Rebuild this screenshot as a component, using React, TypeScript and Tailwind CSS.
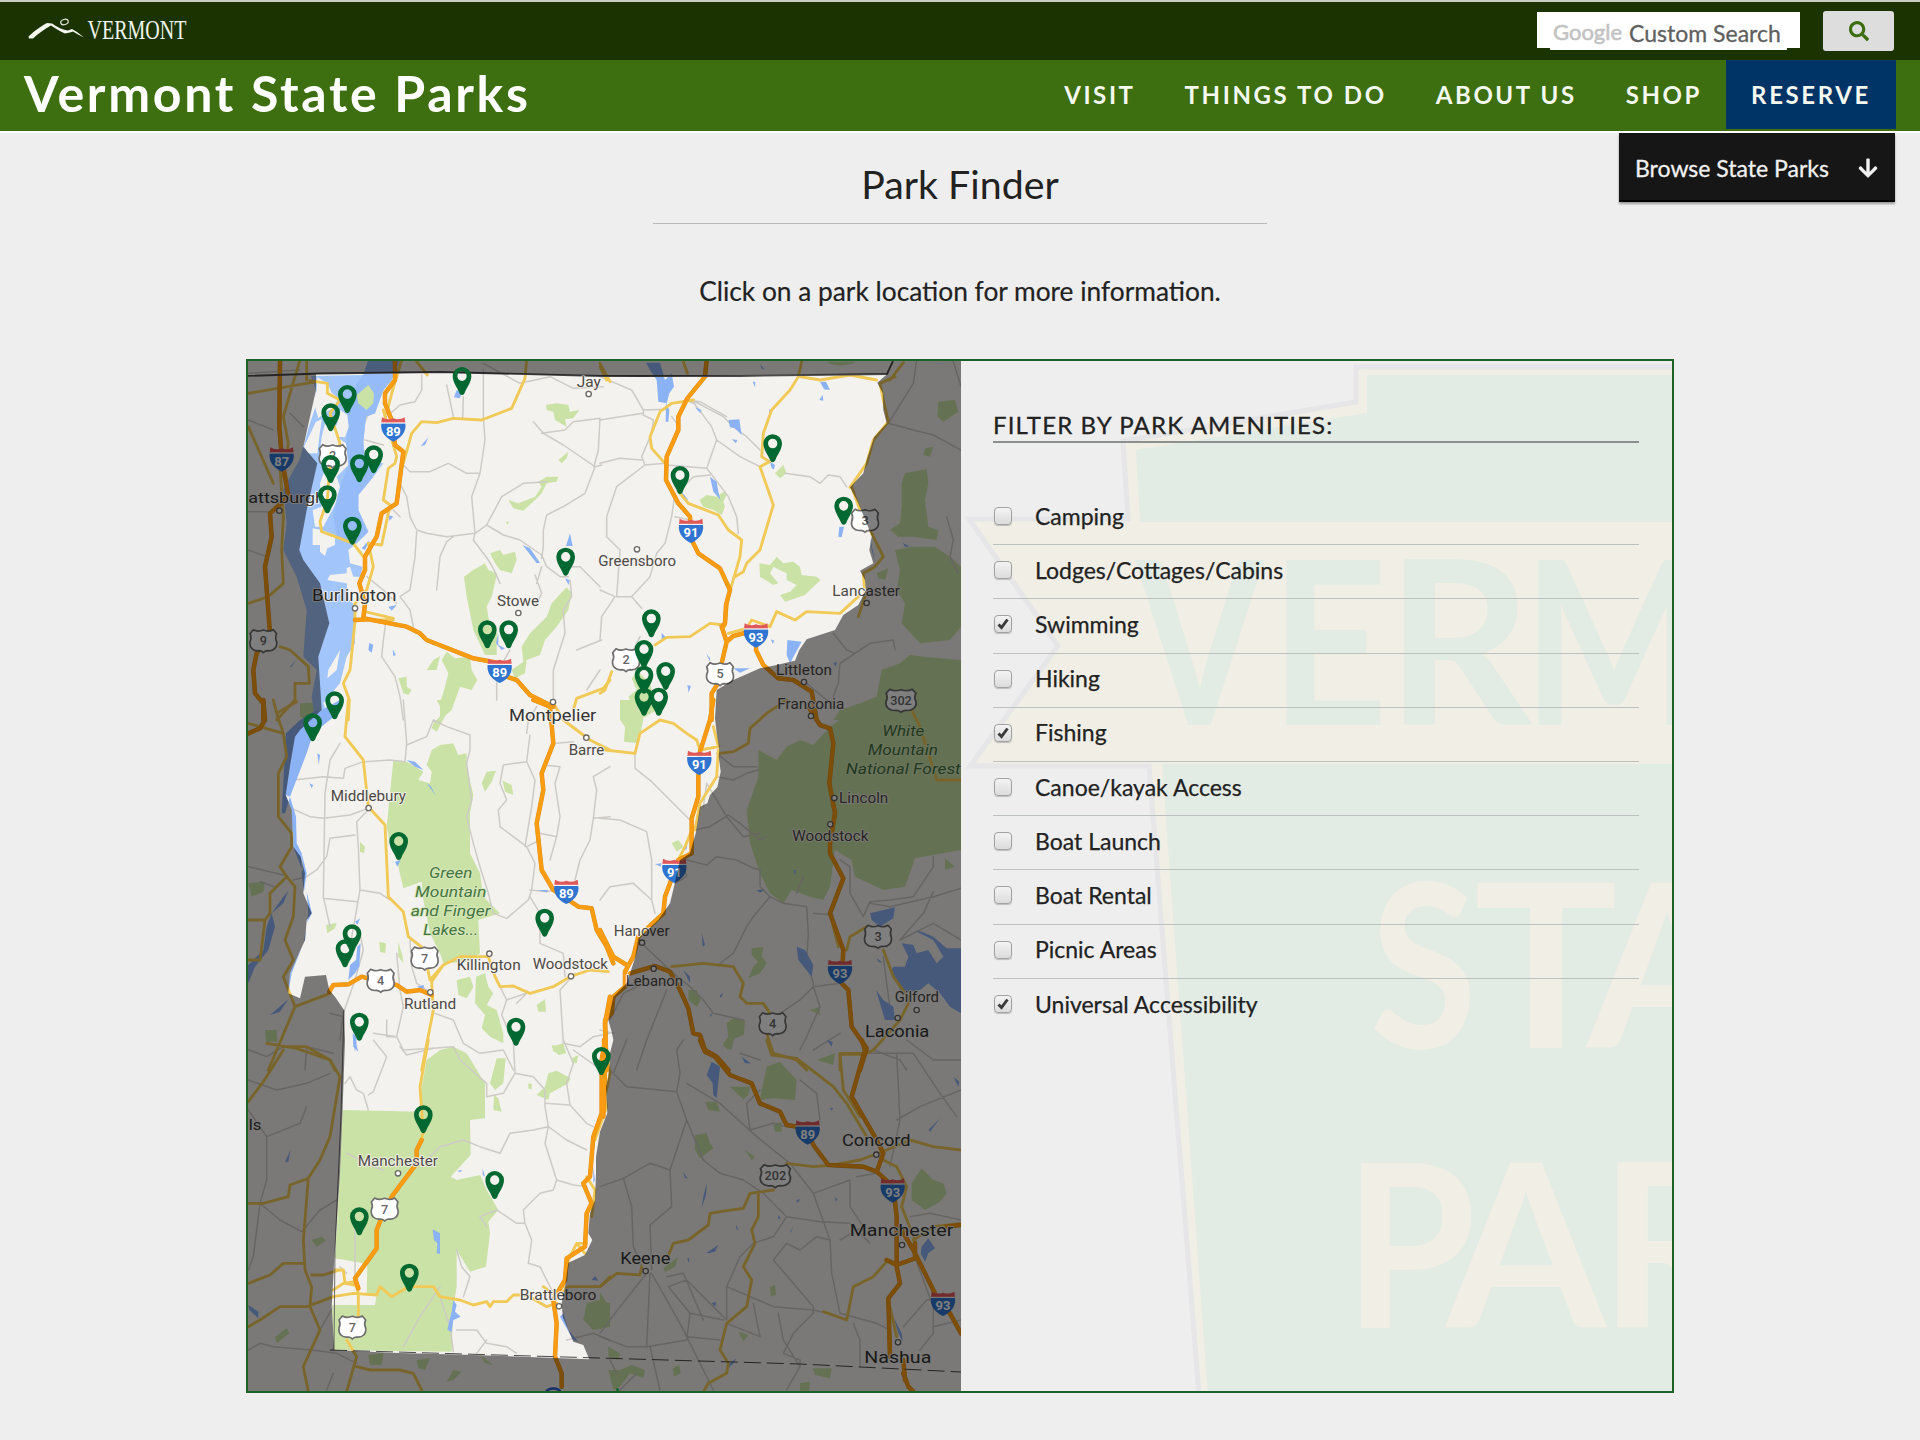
import React from "react";
import { FaSearch, FaArrowDown } from "react-icons/fa";

type TileId = "A" | "B" | "C" | "D" | "E" | "F";

/* Map survey sheets: each sheet has its own origin, three units per pixel. */
const ORIGIN: Record<TileId, [number, number]> = {
  A: [240, 350],
  B: [600, 350],
  C: [240, 700],
  D: [600, 700],
  E: [240, 1040],
  F: [600, 1040],
};
const at = (t: TileId) => `translate(${ORIGIN[t][0]} ${ORIGIN[t][1]}) scale(0.33333)`;

const OUTLINE: [TileId, string][] = [
  ["A", "228,72 400,70 600,68 1080,78"],
  ["B", "120,80 420,76 862,72 832,98 848,130 850,180 860,220 822,262 800,330 790,370 750,412 775,460 800,520 815,560 808,600 820,640 780,662 795,690 798,720 775,765 730,795 705,840 620,868 598,900 585,932 530,945 480,955 400,990 350,1020 345,1105"],
  ["D", "350,100 358,150 356,170 362,215 352,262 330,285 322,310 300,320 287,400 270,460 240,480 222,560 210,610 175,660 115,715 105,775 80,850 40,890 25,960 36,1000 40,1020 30,1060"],
  ["F", "30,60 25,110 18,140 22,220 0,275"],
  ["E", "1068,350 1068,400 1065,480 1050,520 1045,580 1057,600 1035,645 985,668 975,740 965,790 968,830 1000,905 1030,915 1048,958 700,945 450,938 283,930 275,800 285,620 300,400 308,200 315,0"],
  ["C", "312,930 285,890 268,870 258,825 195,830 180,895 145,880 150,820 195,720 200,660 215,640 190,580 195,520 182,470 160,440 155,330 137,285 150,200 165,110 180,90 245,30"],
  ["A", "245,1080 240,1000 235,920 248,880 268,820 240,700 190,630 178,600 200,480 232,340 190,290 210,200 228,120"],
];
const outlinePath =
  "M" +
  OUTLINE.flatMap(([t, s]) =>
    s.split(" ").map((p) => {
      const [x, y] = p.split(",").map(Number);
      return `${(ORIGIN[t][0] + x / 3).toFixed(1)} ${(ORIGIN[t][1] + y / 3).toFixed(1)}`;
    })
  ).join("L") +
  "Z";

const PARKS: [TileId, string][] = [
  ["A", "M355 160L350 130L368 122L385 105L402 125L400 160L380 180Z M918 165L950 160L985 165L990 185L1018 180L1000 205L975 208L980 230L945 210L940 185L920 180Z M805 450L835 460L860 450L885 440L905 410L895 395L920 380L955 380L950 395L920 400L905 430L880 455L850 482L820 475Z M955 330L985 305L980 325L965 340Z M750 610L780 600L790 615L825 605L830 630L815 670L780 660L765 640Z M672 680L700 660L735 640L745 660L770 670L765 700L755 740L740 770L750 830L772 850L770 880L770 915L735 915L700 840L690 790L680 740Z M980 712L995 730L985 780L950 830L915 870L900 915L860 930L855 970L825 985L815 960L850 935L845 890L870 850L920 800L935 760Z M560 960L580 930L600 918L590 960Z M605 930L620 905L645 925L690 920L695 960L712 990L695 1020L660 1010L635 1080L600 1110L600 1060L615 1010L625 970Z M475 985L500 980L500 1010L515 1020L505 1035L490 1030Z M180 1060L235 1058L240 1075L200 1110L180 1100Z M798 515L808 515L802 525Z"],
  ["B", "M525 370L550 345L560 370L540 385Z M298 450L320 435L350 440L370 425L380 435L370 455L375 470L365 495L340 480L310 470Z M478 640L510 645L530 620L550 640L580 635L600 650L605 675L650 680L662 690L640 710L615 735L555 755L540 735L570 725L590 705L560 690L560 670L520 650L510 670L535 700L520 705L480 680Z M1015 155L1065 150L1075 185L1030 215L1012 200Z M975 295L1000 290L990 320L970 315Z M915 370L980 358L985 400L975 450L985 530L1015 540L1010 570L940 560L895 560L870 540L900 520L905 470L905 400Z M885 600L940 590L1005 590L1050 620L1083 650L1083 830L1050 870L960 880L905 820L915 760L890 720L900 660Z M830 670L865 655L855 690L835 685Z M845 960L900 940L930 915L970 920L1083 930L1083 1110L700 1110L720 1080L780 1060L830 1040Z M680 35C700 50 745 50 768 35Z M95 985L115 965L150 1000L170 1080L120 1110L62 1110L60 1090L95 1060L85 1040L110 1020Z"],
  ["C", "M590 0L635 0L620 40L590 95L575 85L580 70L610 40Z M575 150L600 135L640 130L655 165L680 160L680 200L700 285L690 340L690 460L720 520L730 590L780 640L715 660L720 760L690 785L610 790L600 760L570 700L550 600L545 545L490 565L475 500L470 440L450 430L440 380L460 180L500 185L550 215L535 240L570 250L575 215L560 195Z M725 250L740 215L768 212L755 245L735 275Z M788 242L815 255L820 285L795 275Z M360 425L375 440L372 460L360 455Z M258 675L290 668L285 685L262 700Z M418 725L438 730L436 760L420 755Z M475 725L488 770L490 790L475 770Z M650 840L690 830L700 860L680 895L655 885Z M708 830L735 820L745 860L760 880L740 915L770 930L790 1000L790 1030L750 1010L725 985L735 945L705 910Z M890 915L915 898L918 935L895 935Z M75 990L110 990L112 1025L78 1025Z M25 550L75 545L70 575L35 590Z M935 1035L970 1040L965 1060L940 1055Z"],
  ["D", "M60 0L105 0L130 60L115 130L72 125L75 80L60 60Z M475 150L530 180L560 140L600 120L640 135L690 80L740 45L850 20L960 0L1083 0L1083 450L945 475L915 560L850 570L765 530L755 480L705 450L690 560L670 600L630 590L575 570L550 610L510 580L480 520L450 430L440 330L475 230Z M215 430L235 420L250 440L230 455Z M455 745L490 740L485 770L500 790L480 820L445 835L460 800L475 785L455 765Z M265 870L290 870L302 900L290 920L265 900Z M380 970L400 955L435 960L432 1005L405 1015L385 1050L368 1035L385 1010Z M1035 475L1065 500L1035 510Z M630 930L660 920L660 945Z"],
  ["E", "M560 60L600 30L640 20L680 40L735 130L735 235L690 240L692 345L632 410L650 420L720 405L740 450L775 510L745 545L750 580L738 680L690 695L650 630L650 740L640 800L635 935L283 930L275 795L405 795L410 765L380 760L382 672L285 655L300 400L308 210L545 215L545 140Z M770 55L797 55L790 130L765 150L750 130Z M762 165L775 175L785 215L760 210Z M890 165L915 140L925 100L950 92L992 115L985 130L930 160L925 180Z M935 20L970 10L978 40L955 45Z M995 55L1015 45L1010 70L998 70Z M865 130L875 132L875 148L865 146Z M215 600L245 590L258 602L230 620Z M105 890L140 865L148 880L110 910Z M1040 790L1075 780L1110 790L1110 860L1060 870L1030 840Z M385 945L430 940L425 975L390 975Z M530 960L570 955L555 990L535 985Z M620 1025L640 990L665 995L640 1020Z M720 945L760 975L735 970Z"],
  ["F", "M485 150L500 80L540 65L590 120L585 180L520 175L480 180Z M390 140L450 140L445 165L430 178Z M315 185L350 185L360 215L325 210Z M285 285L320 280L330 310L340 325L300 355L285 330Z M520 255L545 245L545 275L525 275Z M435 330L465 350L455 360Z M650 60L705 40L700 75Z M935 430L965 385L1000 420L1030 430L1040 460L1020 485L975 510L935 480Z M190 685L235 650L225 680L195 695Z M510 740L525 735L528 765L512 770Z M0 755L20 790L30 840L0 870Z M415 875L445 885L430 903Z M25 990L60 990L95 975L135 990L130 1015L90 1000L60 1040L40 1050Z M218 985L238 975L242 1000L222 1010Z M600 1030L630 1025L628 1052L600 1052Z M638 985L695 985L690 1015L645 1005Z M370 5L400 5L395 30L375 20Z M25 920L60 940L55 960L25 950Z"],
];

const LAKE =
  "M213 78L228 120L225 175L208 225L190 290L178 330L150 380L130 420L140 520L130 600L170 680L200 780L195 850L190 920L230 960L215 1040L225 1110L255 1110L262 1090L250 1060L300 1000L320 920L345 880L342 800L350 775L325 745L320 700L262 690L270 675L320 670L320 655L330 650L340 680L360 680L368 650L330 640L325 600L350 580L385 545L355 480L355 435L400 380L430 340L375 330L370 275L378 200L405 190L430 120L455 90L480 30L385 30L370 75Z";
const ISLANDS =
  "M232 82L262 100L275 128L295 145L280 175L258 185L235 205L222 160L230 120Z M228 215L245 208L238 260L232 310L205 310L192 290Z M302 180L322 195L326 230L315 262L285 260L270 240L290 225Z M262 195L280 255L318 280L325 345L290 380L300 410L285 465L250 530L225 530L218 480L245 470L240 400L255 360L238 320L245 260Z M218 535L245 540L285 555L285 585L262 595L255 618L240 605L240 585L218 585Z M265 960L300 900L290 960L262 985Z";

const WATER: [TileId, string][] = [
  ["A", "M650 120L665 125L660 145L642 142Z M542 288L565 262L555 285Z M990 550L998 588L978 588Z M848 585L870 595L900 638L890 640Z M445 770L470 765L455 782Z M388 878L400 885L395 908L385 900Z M458 898L468 915L460 918Z M445 495L460 500L448 512Z M775 850L775 885L795 895L785 900L768 880Z M975 685L988 690L986 705Z M365 595L388 570L375 600Z M150 950L168 930L155 950Z"],
  ["B", "M138 38L180 38L195 90L215 70L222 110L208 130L200 160L175 155L170 90L150 60Z M198 160L208 180L205 215L197 215Z M660 95L678 95L690 120L672 118Z M658 150L668 135L670 152Z M385 210L418 208L425 255L405 235L390 232Z M395 268L412 270L408 280Z M285 172L305 180L300 188Z M507 178L517 182L510 195Z M510 335L525 345L522 358L515 355Z M330 380L350 395L355 425L362 450L340 425Z M245 425L265 450L250 445Z M718 530L732 530L725 562L715 560Z M810 560L818 600L826 640L815 600Z M458 95L466 95L465 112Z M185 848L200 865L185 870Z M562 870L605 875L570 940L560 915Z M318 910L330 925L330 935Z M400 955L450 955L420 968Z M513 868L523 872L518 882Z M262 1005L273 1008L266 1028Z M480 42L495 60L485 55Z M105 625L122 628L112 645Z M908 578L930 590L915 590Z M1000 38L1062 44L1010 40Z M180 518L190 525Z M700 940L710 935L708 950Z"],
  ["C", "M245 30L300 0L295 40L220 100L200 160L150 290L137 285L165 110Z M125 340L138 100L180 60L230 30L245 40L165 110L150 200L137 285L155 330L160 440L190 520L185 460L170 430L168 350L150 290L135 340Z M185 460L200 520L192 575L185 520Z M232 160L240 165L236 195Z M208 250L220 255L215 265Z M500 180L525 185L550 210L525 200Z M560 250L572 258L588 288Z M465 485L482 480L472 500Z M200 575L216 640L200 670L195 720L150 820L145 880L155 820L192 725L205 640Z M345 665L360 655L352 675Z M352 740L362 730L358 800L345 820L325 840L330 795L348 780Z M80 680L95 640L130 590L145 572L130 610L95 640L105 680L85 750L45 800L25 850L20 800L70 750Z M90 945L145 898L120 935Z M530 860L552 855L550 868Z M338 1000L350 1010L348 1030L355 1055L340 1040Z M890 570L925 570L920 577Z"],
  ["D", "M145 235L168 255Z M165 492L185 490L182 500Z M250 450L262 435L260 448Z M305 700L315 735L308 740Z M590 740L615 750L640 795L635 830L595 780Z M810 640L885 622L880 655L840 680L815 660Z M905 730L940 735L950 760L985 750L1010 790L1030 770L1000 720L945 692L965 695L1000 710L1040 745L1083 745L1083 940L1050 920L1020 880L985 850L960 870L905 880L875 810L880 800L915 800L925 770Z M828 870L850 900L880 920L885 960L855 960Z M360 885L370 880L362 895Z M250 810L270 830L270 850Z M330 945L340 938L330 952Z M340 1090L358 1100L345 1105Z M680 1020L698 1025L695 1040Z M830 775L850 790L835 785Z M580 510L588 510L585 525Z M470 570L495 568L480 578Z M300 1080L315 1070Z M428 1075L452 1090L435 1090Z"],
  ["E", "M340 0L350 5L345 35Z M65 335L55 360Z M152 330L145 365L135 365Z M652 392L668 390L660 397Z M578 568L600 580L600 642L590 640L592 610L582 600Z M640 780L650 795L645 815L662 830L640 840L635 875L622 870L630 835L635 815Z M25 795L55 815L55 835L28 810Z M728 385L735 410L728 405Z M1060 380L1065 420L1060 430Z M960 830L1000 900L1015 905L985 870L970 820Z M900 680L905 705Z M1055 720L1065 708L1075 722Z M790 1020L805 1035Z"],
  ["F", "M335 65L360 80L350 175L340 165L338 130L320 105Z M250 395L262 415L255 415Z M320 430L318 465L305 505L310 470Z M320 638L355 615L345 635L325 640Z M262 655L268 655L266 670Z M965 620L985 595L1005 625L985 640L975 665L962 640Z M535 525L542 535L535 538Z M590 480L600 478L592 490Z M570 575L580 560L572 578Z M410 555L414 572L408 565Z M690 205L700 203L695 212Z M705 470L712 478L708 485Z M600 665L606 675Z M425 50L452 70L435 68Z M378 55L385 60Z M730 150L742 170Z M472 295L482 302Z M383 975L410 955L400 970L385 985Z M335 790L348 785L346 800Z M880 830L905 880L908 905L895 880Z M1060 110L1078 125L1075 140Z M1037 30L1045 45Z M985 270L1020 235L990 275Z M350 855L362 862Z M415 1010L425 1020Z M435 1025L442 1040Z M968 1020L980 1022Z M1005 1018L1020 1028Z M985 1000L1020 996Z"],
];

const MINOR: [TileId, string][] = [
  ["A", "M545 75L545 120L525 155L480 165L440 200 M620 105L640 200 M670 140L668 205 M730 60L730 200L735 270L720 370L695 440L705 550 M490 345L510 365L570 365L625 340L680 370L720 370 M480 400L500 440L510 500L530 540L560 550L620 560L705 550L740 525L785 440L850 400L920 395 M530 545L525 620L510 720L480 740 M705 550L700 570L745 630L760 655L780 700 M590 720L600 620L620 575L640 560 M740 525L790 555L840 570L905 615L920 650L960 680L985 680 M880 215L910 250L970 285L1065 350L1085 345 M1065 350L1035 430L970 470L920 495L910 540L910 590L905 625 M905 250L975 240L1000 215L1080 205 M1080 205L1075 300L1062 350 M440 800L430 870L425 920L465 980L480 1040L490 1110 M480 740L510 780L520 830 M470 760L430 720L380 680 M885 675L905 730L885 770 M990 690L995 740L970 780L975 850L940 960L940 1050 M810 900L790 935L770 1000L770 1050 M905 650L890 700 M380 90L430 120 M375 270L430 285 M375 215L400 160 M25 210L100 240 M150 190L190 230 M25 485L100 485 M25 70L180 60 M730 40L840 100L930 80L1000 115L1090 110 M25 600L80 620 M460 480L480 500 M980 650L1020 650L1080 710 M1010 900L1085 870 M1080 960L1040 1020"],
  ["B", "M0 80L95 120L130 180L130 195L160 210L155 250L125 320L135 345L195 340 M130 180L200 178 M0 210L60 200L130 190 M125 330L60 325L0 340 M200 345L320 355L350 270L335 230L275 150L370 200L400 230L440 260L480 300 M135 345L50 410L20 500L20 560L60 600L50 740L95 740L150 680L170 610L195 580L215 500L225 430 M0 720L45 740L5 800L0 870 M95 740L125 775 M350 270L420 320L480 350 M320 355L340 380L385 440L410 500L415 550 M215 200L230 220 M240 420L280 380L330 375 M555 370L630 380L660 400L685 375L720 380L740 410 M865 220L940 240L1000 255L1083 300 M950 30L940 100L865 220 M1060 35L1083 110 M280 160L260 150L300 155L380 200 M225 500L270 510 M790 740L820 720 M700 850L740 900L765 910L810 880L880 870L885 900 M765 910L720 940L715 1000L700 1040 M620 1000L680 1050L720 1060 M1040 500L1060 570L1050 620L1075 670 M100 900L120 860"],
  ["C", "M300 130L270 180L255 280L250 590L270 680 M375 185L450 180L495 185L500 130L490 0 M160 240L250 230L310 235L315 205L370 185 M155 325L210 350L250 355L330 345L385 325 M385 330L350 365L355 440L360 570L330 740L360 700L370 750L345 840L310 940L300 1020 M160 540L200 530L230 510L260 470L270 415L345 405 M250 595L350 605 M360 570L420 580L450 600 M500 135L560 110L580 60L620 80L690 105L690 150L680 190L695 300L680 350L700 430L720 500L745 580L760 640L800 655L865 600L875 570L885 490L860 440 M860 100L865 60L890 20 M950 130L1000 125 M790 195L860 185L870 105 M790 195L780 250L800 300L775 330L780 380L820 410L860 440L900 420 M860 185L885 240L875 320L855 440 M910 195L960 200L945 250L960 350L950 410L930 480 M950 410L900 400 M870 590L900 640L900 730L970 760L975 830 M1110 200L1060 230L1070 270L1060 355L1110 350 M1060 355L1050 420L1020 480L1005 540 M870 570L920 575L940 570 M510 720L515 800L530 850L560 870 M470 760L480 870L490 920L470 1010L400 1000 M585 940L640 960L670 1030L720 1060L790 1050L820 1110 M780 860L800 900L785 945L800 980 M800 900L860 880L830 910 M960 870L970 1030L1020 1040L1060 1010L1110 1000 M1005 820L960 870 M440 960L440 1010L470 1010L490 1050L580 1045 M25 500L130 525 M60 545L100 560 M130 1040L200 1040L195 1110 M200 1040L280 1060 M270 940L310 950"],
  ["D", "M105 160L105 205L155 245L230 320L270 360 M0 355L60 360L140 395L155 480L155 600L165 640 M0 600L30 560L100 550L155 600 M285 390L330 380L385 345L420 370L480 420L500 410 M260 480L320 495L350 470L410 480L450 500L480 510L480 560L510 590 M225 550L260 530L250 490 M350 160L400 200L470 200 M350 230L400 240L440 220L475 210 M510 590L460 650L440 680L400 760L360 790 M510 590L550 610L620 620L625 700L620 780L640 850L640 860L720 850 M640 860L600 900L540 940 M640 640L700 645 M720 480L750 500L750 580L790 650L810 605L870 600L940 590L1000 500L1000 470 M810 610L870 620L1000 590L1083 565 M1000 575L970 640L900 720L1000 670L1083 720 M30 960L70 880L110 860L160 845L190 850 M130 735L220 820L270 860L310 900L340 940L430 960 M110 1110L140 1020L200 870 M640 860L660 920L620 1010L600 1050 M860 740L820 700 M850 770L860 850L875 960 M590 580L610 530 M310 320L320 250L380 350L430 410L480 400 M0 990L40 1000 M820 1050L900 1080L920 1110 M420 1060L480 1080 M720 1000L640 1050"],
  ["E", "M330 110L350 150L370 160L385 210 M315 130L330 110 M385 165L400 155L440 50L400 0 M480 20L500 45L580 25L640 20L660 60L740 130L740 170L790 160L825 100L820 0 M825 100L880 110L915 150L915 200L925 260L880 270L810 280L780 340L720 320L670 300L600 320L570 350 M915 190L990 195L1040 250L1060 260 M990 195L980 130L1000 70L970 0 M1000 30L1070 80 M925 260L915 310L950 420L940 450L900 460L850 510L855 550L830 550L770 510L720 530L740 560 M950 420L1000 435L1040 440 M925 260L980 300L1040 330 M855 550L875 600L865 670L900 680L950 780 M345 570L345 720 M600 740L540 830L490 920 M600 770L630 860L640 935 M650 630L665 680L690 710L670 770 M650 870L710 870L740 910L800 920L830 940 M740 900L710 940 M25 210L80 290L80 420L60 490L120 540L185 575 M80 290L180 250L200 200 M25 120L110 150L200 130L270 100 M60 490L40 650L25 690 M240 510L185 575 M240 510L290 480 M25 930L60 910L100 920L215 930L290 940L350 970 M215 930L240 870L280 800 M280 1000L260 1050 M300 680L320 700 M320 340L400 380L430 390 M0 20L80 50L130 20 M980 900L1060 880L1110 900"],
  ["F", "M0 60L80 140L230 155L260 240L310 360L360 400L430 420L490 460L560 530L660 545L750 550L810 610 M80 0L40 100 M260 240L210 390L150 370L70 415L0 440 M210 390L215 500L150 555L155 690 M70 415L95 500L100 620L130 690 M260 130L360 190L470 290L570 370L640 460L690 600L695 700L720 820L830 850 M230 155L240 100L230 30L250 0 M480 150L440 190L450 270L520 250L560 260 M560 530L520 590L460 610L420 650L380 740L380 840L260 720L205 740L270 820L370 840 M640 460L750 420L750 500L790 560L720 600 M690 600L650 590L600 630L560 610L520 660L640 800L640 820 M640 820L580 880L550 940L600 960L600 980L560 1050 M535 820L550 900L600 980 M460 790L480 890L380 850 M260 890L360 900 M270 820L260 900L140 920L150 700 M150 920L180 1050 M140 700L60 800L0 880 M155 700L240 850L340 1050 M0 890L80 920L140 920 M380 740L520 800L640 810L680 820 M600 120L650 160L660 240 M870 380L900 240L890 40L800 40 M890 240L960 200L1083 150 M890 40L940 40L1020 160L1070 230 M1083 60L1000 60L920 0 M930 530L990 520L1083 540 M940 640L1000 800L1000 880L960 930 M1000 860L1083 840 M910 860L980 780L1040 770 M830 400L770 410 M760 850L780 900L780 980 M830 850L870 870 M310 840L250 700L200 710 M110 1000L60 1050 M50 1000L30 960"],
];

const YELLOW: [TileId, string][] = [
  ["A", "M210 92L262 100L262 130L300 150L270 190L300 280L270 340L262 450L240 515L245 545L300 565L340 580L370 620 M485 30L455 130L440 190 M430 180L470 320L465 340L445 355L430 450L450 465L425 585L385 580L400 650L380 720L345 760L345 810L460 810 M860 30L855 85L815 175L725 210L640 205L590 218L545 215L515 250L490 340 M375 785L460 805 M345 815L330 960L310 1000L328 1050L325 1110 M25 130L200 100L230 95 M200 30L200 90 M25 230L100 400 M120 350L130 500L125 600L130 700L85 740L25 760 M120 890L150 900L205 950L208 1000L165 1000L165 1050L110 1110 M180 30L150 130L130 200L145 280L130 380 M1110 990L1090 1015L1010 1045L1000 1080 M530 35L562 75 M1080 40L1110 95"],
  ["B", "M605 35L595 80L570 120L515 180L490 250L485 320L508 335L480 350L520 465L480 600L440 640L430 665L405 680 M600 80L660 90L750 75L830 90 M280 150L215 160L180 185L150 260L155 295L195 340 M240 430L265 460L355 495L385 540L425 570L420 620L385 740L375 830 M755 410L780 480L820 560L850 620L825 650L790 670L795 740L775 800 M775 740L720 790L620 785L585 810L530 785L510 830L455 810L440 835L385 850 M165 885L200 862L270 860L330 820L370 825 M35 965L15 1020L0 1030 M885 80L840 100L850 150L865 215L820 270L800 340L750 412 M250 35L262 70 M0 50L20 90 M910 38L870 90"],
  ["C", "M325 0L315 110L370 180L385 320L435 375L445 590L490 635L505 710L550 745L570 840L610 795L660 770L745 770L765 830L780 860L820 858L870 880L940 860L990 830L1050 810L1105 815 M610 795L575 845L580 930L545 1110 M940 10L970 60L1050 120L1110 150 M25 70L130 100L140 170L115 220L115 350L155 400L155 440L120 500L140 530L165 560L160 650L135 720L160 780L130 830L165 920L85 1110 M165 920L270 880 M140 530L90 580L90 640L75 660L60 780L25 780 M25 660L75 660 M110 40L130 100 M100 0L110 40L170 5 M80 1030L170 1045L270 1080L285 1110"],
  ["D", "M15 150L105 160L120 100L180 60L220 70L260 100L290 120L300 150 M340 80L355 140L300 150 M355 150L350 230L300 310L285 390 M235 480L255 440L280 380 M215 800L310 790L400 800L430 850L420 890L440 910L490 910L510 940L500 1000L520 1060L590 1080L620 1110 M800 680L750 710L740 750 M690 640L715 740 M850 750L880 830L930 900L900 960L820 1050L800 1060 M720 1060L790 1060 M720 1060L720 1110 M930 20L960 80L1010 240L1083 240 M360 160L400 155L445 130L450 85L500 40L560 0"],
  ["E", "M565 0L540 140L550 280L530 330 M280 770L340 760L410 765L420 740L455 770L505 740L580 740L600 770L660 780L700 795L740 785L750 800L760 785L800 785L820 765L860 765L920 800L950 790 M280 750L310 730L345 725L355 760L355 830 M285 690L310 690L315 730L345 735 M25 185L70 125L130 30 M130 20L200 20L270 60L300 110L270 290L240 360L205 415L150 435L145 470L70 490L25 490 M205 415L190 600L195 690L215 740L210 800L240 870L190 980L205 1055 M190 670L130 670L90 705L25 730 M280 770L200 800L120 800L60 840L25 860 M215 705L250 705L300 690 M320 900L350 950L320 1055 M350 980L390 990L480 990L520 1000L545 1050 M1100 40L1110 100L1095 170L1100 200L1065 300 M1040 410L1065 450L1055 530 M1040 610L1010 610L985 660L970 740 M910 740L950 770L985 740L1080 740L1110 710 M1035 640L1010 610"],
  ["F", "M500 0L515 45L590 55L700 140L740 190L770 240L800 290 M720 43L790 43 M720 43L730 150L780 230 M560 370L640 380L700 375L780 360L860 330L930 300L1000 320L1083 330 M850 360L890 380L920 440L905 500L945 600 M200 660L220 610L265 600L325 555L330 520L360 515L430 505L450 460L520 450 M475 460L475 530L455 570L465 610L430 680L455 720L440 800L380 850L360 930L385 970L380 1000L325 1030L310 1055 M0 740L50 700L120 705L125 680 M670 815L740 840L760 740L820 710L860 665 M870 800L890 890 M940 600L1000 560L1083 550"],
];

const ORANGE: [TileId, string][] = [
  ["A", "M120 30L118 230L125 320L145 440L90 490L95 560L75 650L90 850L50 910L40 960L45 1030L70 1060L70 1110 M465 30L465 90L435 130L435 160L455 210L465 285L490 305L470 460L425 490L410 560L375 620L375 660L358 700L375 760L370 805L500 830L540 850L560 870L700 925L780 940L800 980L830 990L870 1035L940 1070 M345 810L380 808"],
  ["B", "M320 30L315 80L262 145L235 200L235 240L200 320L198 390L235 460L270 500L275 570L295 610L360 655L390 720L378 765L375 820L365 830L380 875L365 940L360 990L335 1030L335 1110 M380 875L400 858L430 850L470 850L468 900L490 945L535 985L580 990L635 1025L650 1110"],
  ["C", "M70 0L75 60L60 85L25 100 M880 0L930 20L940 130L905 220L910 270L890 370L905 510L940 570L1015 620L1055 625L1070 690L1100 740L1120 790 M268 875L280 855L325 853L365 830L420 845L470 855L500 875L540 870L575 885 M1110 890L1095 970L1100 1110"],
  ["D", "M340 0L330 60L300 155L295 230L295 290L275 355L275 460L235 480L210 550L195 590L190 640L115 710L100 770L75 815L75 860L40 890L35 940L15 960L18 1110 M0 690L40 770L80 795 M90 820L165 798L210 815L240 870L265 925L280 1000L300 1005L315 1050L350 1070L385 1110 M625 20L660 75L690 85L700 130L688 250L705 340L690 430L690 460L730 535L690 640L730 750L725 850L745 870L755 980L800 1045L780 1110"],
  ["E", "M545 300L530 330L530 370L455 470L430 520L410 570L410 625L345 715L355 745 M1095 0L1085 60L1085 220L1060 290L1050 410L1030 430L1055 490L1040 520L1035 620L980 655L975 720L940 780L950 850L945 950L965 1000L965 1040"],
  ["F", "M12 0L15 90L10 230 M300 0L315 35L345 50L390 105L455 130L480 190L540 215L560 255L620 265L640 315L685 375L790 380L830 395L850 340L830 300L755 170L795 30L785 0 M830 395L880 440L890 530L890 680L900 730L865 775L870 950 M910 1000L925 1040L940 1055 M905 570L940 630L1010 770L1050 820L1083 880 M860 660L890 675L945 655L945 610 M1040 560L1083 555 M910 960L915 1020"],
];

type Label = [TileId, string, number, number, number, number, ("i" | "b")?];
const LABELS: Label[] = [
  ["A", "Jay", 1010, 111, 72, 42],
  ["A", "attsburgh", 25, 459, 230, 46, "b"],
  ["A", "Burlington", 216, 752, 254, 49, "b"],
  ["A", "Stowe", 771, 768, 126, 42],
  ["A", "Montpelier", 807, 1112, 262, 48, "b"],
  ["B", "Greensboro", -5, 648, 233, 42],
  ["B", "Lancaster", 697, 738, 203, 42],
  ["B", "Littleton", 528, 976, 168, 42],
  ["B", "Franconia", 532, 1078, 201, 42],
  ["C", "Barre", 986, 164, 107, 42],
  ["C", "Middlebury", 272, 303, 226, 42],
  ["C", "Green", 567, 533, 130, 42, "i"],
  ["C", "Mountain", 525, 590, 214, 42, "i"],
  ["C", "and Finger", 512, 647, 240, 42, "i"],
  ["C", "Lakes...", 550, 705, 165, 42, "i"],
  ["C", "Killington", 650, 810, 192, 42],
  ["C", "Woodstock", 878, 808, 226, 42],
  ["C", "Rutland", 492, 927, 157, 42],
  ["D", "White", 847, 108, 126, 42, "i"],
  ["D", "Mountain", 803, 166, 211, 42, "i"],
  ["D", "National Forest", 737, 223, 345, 42, "i"],
  ["D", "Lincoln", 717, 309, 148, 42],
  ["D", "Woodstock", 577, 422, 228, 42],
  ["D", "Hanover", 41, 708, 168, 42],
  ["D", "Lebanon", 77, 857, 172, 42],
  ["D", "Gilford", 884, 907, 133, 42],
  ["D", "Laconia", 795, 1011, 193, 47, "b"],
  ["E", "ls", 26, 269, 38, 46, "b"],
  ["E", "Manchester", 353, 379, 241, 42],
  ["E", "Brattleboro", 839, 779, 230, 42],
  ["F", "Concord", 726, 319, 206, 48, "b"],
  ["F", "Manchester", 749, 588, 311, 51, "b"],
  ["F", "Keene", 61, 672, 150, 47, "b"],
  ["F", "Nashua", 793, 970, 201, 51, "b"],
];

const TOWNS: [TileId, number, number][] = [
  ["A", 1046, 132], ["A", 118, 482], ["A", 345, 775], ["A", 835, 789], ["A", 939, 1056],
  ["B", 111, 598], ["B", 800, 759], ["B", 612, 996], ["B", 633, 1098],
  ["C", 1039, 113], ["C", 386, 324], ["C", 748, 761], ["C", 993, 829], ["C", 571, 877],
  ["D", 703, 294], ["D", 691, 373], ["D", 126, 728], ["D", 161, 806], ["D", 950, 930], ["D", 893, 954],
  ["E", 474, 400], ["E", 957, 799],
  ["F", 829, 344], ["F", 906, 615], ["F", 137, 693], ["F", 894, 907],
];

const INTERSTATES: [TileId, string, number, number][] = [
  ["A", "89", 460, 238], ["A", "87", 125, 328], ["A", "89", 779, 962],
  ["B", "91", 273, 542], ["B", "93", 468, 856], ["C", "89", 979, 575],
  ["D", "91", 298, 188], ["D", "91", 223, 512], ["D", "93", 720, 815],
  ["F", "89", 623, 277], ["F", "93", 878, 451], ["F", "93", 1029, 791],
];
const US_ROUTES: [TileId, string, number, number][] = [
  ["A", "2", 278, 318], ["A", "9", 70, 873], ["B", "2", 78, 930], ["B", "5", 360, 972],
  ["B", "3", 795, 512], ["B", "302", 903, 1052], ["C", "7", 554, 775], ["C", "4", 422, 842],
  ["D", "3", 834, 710], ["D", "4", 518, 972], ["E", "7", 434, 508], ["E", "7", 337, 862],
  ["F", "202", 526, 408],
];

const PINS: [TileId, number, number][] = [
  ["A", 666, 133], ["A", 322, 187], ["A", 272, 242], ["A", 401, 368], ["A", 358, 395],
  ["A", 272, 397], ["A", 262, 488], ["A", 337, 582], ["A", 977, 675], ["A", 742, 893],
  ["A", 806, 893], ["A", 284, 1106],
  ["B", 518, 335], ["B", 240, 430], ["B", 731, 522], ["B", 154, 860], ["B", 132, 952],
  ["B", 197, 1018], ["B", 132, 1029], ["B", 132, 1095], ["B", 176, 1095],
  ["C", 218, 122], ["C", 476, 478], ["C", 914, 708], ["C", 336, 755], ["C", 315, 800],
  ["C", 358, 1020], ["C", 828, 1035],
  ["E", 1084, 103], ["E", 550, 278], ["E", 764, 475], ["E", 358, 584], ["E", 508, 753],
];

function Lines({ data, color, width }: { data: [TileId, string][]; color: string; width: number }) {
  return (
    <g fill="none" stroke={color} strokeWidth={width} strokeLinejoin="round" strokeLinecap="round">
      {data.map(([t, d]) => (
        <path key={t} d={d} transform={at(t)} />
      ))}
    </g>
  );
}

function Areas({ data, color }: { data: [TileId, string][]; color: string }) {
  return (
    <g fill={color}>
      {data.map(([t, d]) => (
        <path key={t} d={d} transform={at(t)} />
      ))}
    </g>
  );
}

function ParkMap() {
  return (
    <svg className="block h-full w-full" viewBox="248 361 713 1030" preserveAspectRatio="none">
      <rect x="240" y="350" width="730" height="1050" fill="#f4f2ee" />
      <Areas data={PARKS} color="#cbe2a6" />
      <Lines data={MINOR} color="#cecbc6" width={4.5} />
      <g transform={at("A")}>
        <path d={LAKE} fill="#a2c6fc" />
        <path d="M385 30L480 30L455 90L430 120L405 190L378 200L370 275L375 330L400 380L355 435L355 480L385 545L350 580L300 570L290 560L280 500L300 410L325 345L318 280L326 230L320 200L350 100L370 75Z" fill="#96bbf9" />
        <path d={ISLANDS} fill="#f4f2ee" />
        <path d="M350 135L385 105L402 130L400 160L380 180L355 160Z" fill="#cbe2a6" />
      </g>
      <Areas data={WATER} color="#8cb2f6" />
      <Lines data={YELLOW} color="#f1c956" width={8.6} />
      <Lines data={ORANGE} color="#dd8f1c" width={13.5} />
      <Lines data={ORANGE} color="#f99c12" width={11} />
      <g fill="none" stroke="#4c4a4a" strokeWidth="1.8">
        <path d="M247 376L320 373.5L440 372L600 376L740 376L887 374L893 361" />
        <path d="M330 1350L800 1364L961 1372" strokeWidth="1" strokeDasharray="17 6" />
        <path d="M344 1010L341 1115L335 1250L334 1350" strokeWidth="0.8" />
      </g>

      {INTERSTATES.map(([t, n, x, y], i) => (
        <g key={i} transform={`${at(t)} translate(${x} ${y})`}>
          <path d="M-34 -36Q-18 -26 0 -33Q18 -26 34 -36L36 -20L-36 -20Z" fill="#e0595a" />
          <path d="M-36 -18H36C40 8 22 27 0 37C-22 27 -40 8 -36 -18Z" fill="#2f74d0" />
          <path d="M-37 -19H37" stroke="#fff" strokeWidth="3" />
          <text y="20" textAnchor="middle" fontFamily="Roboto, sans-serif" fontWeight="700" fontSize="39" fill="#fff">
            {n}
          </text>
        </g>
      ))}
      <ellipse cx="553.300" cy="1392" rx="7" ry="3.500" fill="none" stroke="#2f5fd0" strokeWidth="2.500" />
      {US_ROUTES.map(([t, n, x, y], i) => (
        <g key={i} transform={`${at(t)} translate(${x} ${y})`}>
          <path
            transform={n.length > 1 ? "scale(1.12 1)" : undefined}
            d="M-30 -34Q-16 -26 0 -33Q16 -26 30 -34L40 -22Q34 -10 40 2Q42 16 34 23Q26 31 12 29Q4 30 0 35Q-4 30 -12 29Q-26 31 -34 23Q-42 16 -40 2Q-34 -10 -40 -22Z"
            fill="#fff"
            stroke="#6d6d6d"
            strokeWidth="5"
            strokeLinejoin="round"
          />
          <text y="13" textAnchor="middle" fontFamily="Roboto, sans-serif" fontWeight="500" fontSize="38" fill="#666">
            {n}
          </text>
        </g>
      ))}
      {TOWNS.map(([t, x, y], i) => (
        <circle key={i} transform={at(t)} cx={x} cy={y} r="8" fill="#fff" stroke="#6b6763" strokeWidth="4" />
      ))}
      {LABELS.map(([t, s, x, y, w, size, kind], i) => (
        <text
          key={i}
          transform={at(t)}
          x={x}
          y={y}
          textLength={w}
          lengthAdjust="spacingAndGlyphs"
          fontFamily="Roboto, sans-serif"
          fontSize={size}
          fontStyle={kind === "i" ? "italic" : "normal"}
          fill={kind === "i" ? "#45753f" : kind === "b" ? "#353535" : "#4d4946"}
          stroke={kind === "i" ? "#d8e8be" : "#f6f4f0"}
          strokeWidth="5"
          strokeLinejoin="round"
          paintOrder="stroke"
        >
          {s}
        </text>
      ))}

      <path d={`M240 350H970V1400H240Z${outlinePath}`} fillRule="evenodd" fill="#000" fillOpacity="0.5" />

      {PINS.map(([t, x, y], i) => (
        <path
          key={i}
          transform={`${at(t)} translate(${x} ${y + 2})`}
          d="M0 0C-5 0 -7 -4 -9 -9C-14 -22 -28 -38 -28 -57A28 27 0 0 1 28 -57C28 -38 14 -22 9 -9C7 -4 5 0 0 0ZM0 -71A14 14.500 0 1 0 0.1 -42A14 14.500 0 1 0 0 -71Z"
          fillRule="evenodd"
          fill="#006830"
        />
      ))}
      <circle cx="617.500" cy="1389.500" r="1.500" fill="#006830" />
    </svg>
  );
}

type Glyph = [string, number, number, number];
const SIGN_GREEN: Glyph[] = [["V", 1136, 725, 127], ["E", 1270, 725, 118], ["R", 1386, 725, 146], ["M", 1523, 725, 182]];
const SIGN_CREAM: Glyph[] = [
  ["S", 1370, 1048, 107], ["T", 1474, 1048, 144], ["A", 1587, 1048, 160],
  ["P", 1344, 1328, 132], ["A", 1446, 1328, 160], ["R", 1599, 1328, 146],
];

function SignWatermark() {
  const glyph = ([c, x, y, w]: Glyph, i: number) => (
    <text key={i} x={x} y={y} textLength={w} lengthAdjust="spacingAndGlyphs" fontFamily="Lato, sans-serif" fontWeight="700" fontSize="229">
      {c}
    </text>
  );
  return (
    <svg className="absolute inset-0 h-full w-full" viewBox="961 361 711 1030" preserveAspectRatio="none">
      <path d="M1680 367H1356V402L1272 416L1123 441L1128 519H969L1058 646L970 766H1149L1199 1395H1680Z" fill="#f0eee5" stroke="#e6e5e7" strokeWidth="5" />
      <path d="M1680 375H1367V413L1136 450L1140 522H1680Z" fill="#e2ebe4" />
      <path d="M1680 764H1162L1208 1395H1680Z" fill="#e2ebe4" />
      <g fill="#e2ebe4">{SIGN_GREEN.map(glyph)}</g>
      <g fill="#f0eee5">{SIGN_CREAM.map(glyph)}</g>
    </svg>
  );
}

const AMENITIES: [string, boolean][] = [
  ["Camping", false],
  ["Lodges/Cottages/Cabins", false],
  ["Swimming", true],
  ["Hiking", false],
  ["Fishing", true],
  ["Canoe/kayak Access", false],
  ["Boat Launch", false],
  ["Boat Rental", false],
  ["Picnic Areas", false],
  ["Universal Accessibility", true],
];

function Checkbox({ checked }: { checked: boolean }) {
  return (
    <span className="relative ml-px block h-[18px] w-[18px] shrink-0 rounded-[4px] border border-[#a2a2a2] bg-linear-to-b from-[#f3f3f3] to-[#dcdcdc] shadow-[0_1px_1px_rgba(0,0,0,0.2)]">
      {checked && (
        <svg className="absolute inset-0 h-full w-full" viewBox="0 0 16 16">
          <path d="M3.500 8.500L6.500 11.500L12.500 3.500" fill="none" stroke="#3a3a3a" strokeWidth="2.900" />
        </svg>
      )}
    </span>
  );
}

export default function App() {
  return (
    <div className="h-[1440px] w-[1920px] overflow-hidden bg-[#eeeeee] font-[Lato,sans-serif] text-[#222]">
      <header className="relative">
        <div className="h-[2px] bg-[#c9cfc4]" />
        <div className="flex h-[58px] items-start justify-between bg-[#1b3300] pl-[26px] pr-[26px]">
          <svg className="mt-[13px] h-[36px] w-[166px] overflow-visible" viewBox="26 16 166 36">
            <path d="M28.500 37.500C33 33 41 27 47 24L52 24.500C57 28 63 31 68 31.500L72 30L77 33L84 38.500L78 35.500L73 32.500L70 33.500L65 34.500C59 32 54 28.500 51 26.500C44 30 38 35 33 39.500L29 39.500Z" fill="#f4f7f0" />
            <ellipse cx="64.500" cy="23" rx="3.800" ry="2.600" transform="rotate(-15 64.500 23)" fill="none" stroke="#e9ede4" strokeWidth="1.200" />
            <text x="87.500" y="39.500" textLength="99" lengthAdjust="spacingAndGlyphs" fontFamily="Liberation Serif, serif" fontSize="28" fill="#f1f4ee">
              VERMONT
            </text>
          </svg>
          <div className="flex">
            <div className="relative mt-[10px] flex h-[36px] w-[263px] items-center bg-white pl-4">
              <div className="absolute left-[13px] top-[35px] h-[3px] w-[237px] bg-white" />
              <span className="relative mt-[3px] text-[22px] leading-none text-[#c3c3c3] [-webkit-text-stroke:0.6px_#c3c3c3]">Google</span>
              <span className="relative ml-[7px] mt-[6px] whitespace-nowrap text-[23px] leading-none text-[#5f5f5f] [-webkit-text-stroke:0.3px_#5f5f5f]">Custom Search</span>
            </div>
            <div className="ml-[23px] mt-[9px] flex h-[40px] w-[71px] items-center justify-center rounded-[3px] bg-[#dddddd]">
              <FaSearch className="h-[20px] w-[20px] text-[#3b6d10]" />
            </div>
          </div>
        </div>
        <div className="flex h-[71px] items-start justify-between bg-[#3d6e10] pl-6 pr-6">
          <h1 className="mt-[3px] whitespace-nowrap text-[50px] font-bold leading-[60px] tracking-[2.700px] text-white">Vermont State Parks</h1>
          <nav className="flex h-[69px] items-center text-[24px] font-bold tracking-[2.600px] text-[#f4f8ef]">
            <a className="mr-[49px] whitespace-nowrap">VISIT</a>
            <a className="mr-[49px] whitespace-nowrap">THINGS TO DO</a>
            <a className="mr-[49px] whitespace-nowrap">ABOUT US</a>
            <a className="mr-[24px] whitespace-nowrap">SHOP</a>
            <a className="flex h-full w-[170px] items-center justify-center bg-[#003366]">RESERVE</a>
          </nav>
        </div>
        <div className="h-[2px] bg-white" />
        <div className="absolute right-[25px] top-[133px] flex h-[69px] w-[276px] items-center justify-between border-b-2 border-black bg-[#161616] pl-4 pr-4 text-[23px] text-[#f0f0f0] shadow-[0_2px_2px_rgba(0,0,0,0.35)]">
          <span className="mt-1 whitespace-nowrap [-webkit-text-stroke:0.3px_#f0f0f0]">Browse State Parks</span>
          <FaArrowDown className="mt-[2px] h-[22px] w-[22px]" />
        </div>
      </header>

      <main className="flex flex-col items-center">
        <h2 className="mt-[23px] flex h-[68px] w-[614px] items-start justify-center border-b-[1.500px] border-[#b9b9b9] text-[39.300px] leading-[56px]">
          Park Finder
        </h2>
        <p className="mt-[47px] text-[26.300px] leading-[40px] [-webkit-text-stroke:0.2px_#222]">Click on a park location for more information.</p>

        <section className="mt-[48px] flex h-[1034px] w-[1428px] border-2 border-[#1d6328]">
          <div className="h-full w-[713px] shrink-0 overflow-hidden">
            <ParkMap />
          </div>
          <div className="relative h-full flex-1 overflow-hidden">
            <SignWatermark />
            <div className="relative ml-8 mr-[33px] pt-[45px]">
              <h3 className="h-[37px] whitespace-nowrap border-b-2 border-[#8b8f8e] text-[24px] leading-[38px] tracking-[1.150px] [-webkit-text-stroke:0.3px_#222]">
                FILTER BY PARK AMENITIES:
              </h3>
              <ul className="mt-[48px]">
                {AMENITIES.map(([name, on], i) => (
                  <li
                    key={name}
                    className={
                      "flex h-[54.200px] items-center gap-[23px] pb-[3px] " +
                      (i < AMENITIES.length - 1 ? "border-b-[1.500px] border-[#bcc0be]" : "")
                    }
                  >
                    <Checkbox checked={on} />
                    <span className="whitespace-nowrap text-[23px] leading-none [-webkit-text-stroke:0.25px_#222]">{name}</span>
                  </li>
                ))}
              </ul>
            </div>
          </div>
        </section>
      </main>
    </div>
  );
}
